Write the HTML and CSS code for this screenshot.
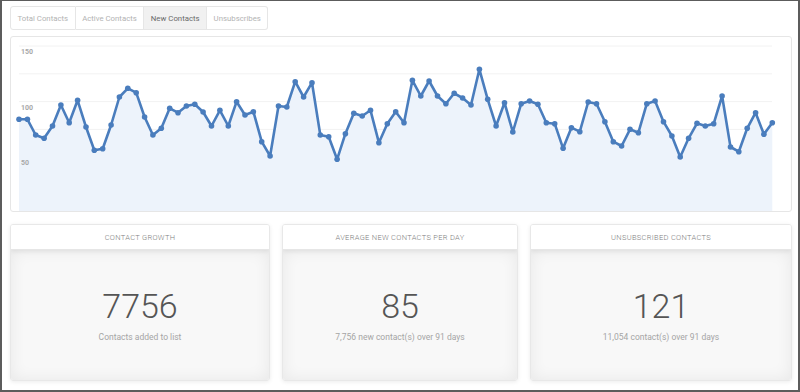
FILE: index.html
```html
<!DOCTYPE html>
<html lang="en">
  <head>
    <meta charset="UTF-8" />
    <meta name="viewport" content="width=device-width, initial-scale=1.0" />
    <title>Contacts</title>
    <link rel="stylesheet" href="styles.css">
  </head>
  <body>
    <div class="frame">
      <ul class="tabs">
        <li class="tab">Total Contacts</li>
        <li class="tab">Active Contacts</li>
        <li class="tab active">New Contacts</li>
        <li class="tab">Unsubscribes</li>
      </ul>

      <div class="chart-card">
        <svg class="chart" width="780" height="174" viewBox="0 0 780 174">
          <defs>
            <marker id="dot" markerWidth="7" markerHeight="7" refX="3.5" refY="3.5" markerUnits="userSpaceOnUse">
              <circle cx="3.5" cy="3.5" r="2.8" fill="#4a7dbd" />
            </marker>
          </defs>
          <g class="grid">
            <line x1="8" y1="9" x2="761" y2="9" />
            <line x1="8" y1="36.8" x2="761" y2="36.8" />
            <line x1="8" y1="64.6" x2="761" y2="64.6" />
            <line x1="8" y1="92.4" x2="761" y2="92.4" />
            <line x1="8" y1="120.2" x2="761" y2="120.2" />
            <line x1="8" y1="148" x2="761" y2="148" />
          </g>
          <polygon class="area" points="8,174 8,82.3 16.4,82.3 24.7,98 33.1,101.3 41.5,89 49.9,68 58.2,85.7 66.6,63.3 75,90 83.3,113.3 91.7,111.7 100.1,88 108.4,60 116.8,51.3 125.2,55.7 133.6,80 141.9,98 150.3,91.3 158.7,71.3 167,75.7 175.4,69 183.8,67.3 192.1,75 200.5,89 208.9,73.3 217.3,89 225.6,64.7 234,78 242.4,74.7 250.7,104.7 259.1,119 267.5,69 275.8,70 284.2,44.7 292.6,60 301,45.7 309.3,98 317.7,99.7 326.1,122.3 334.4,96.7 342.8,76.3 351.2,79 359.5,73.3 367.9,105.7 376.3,86.7 384.7,74.7 393,85.7 401.4,43.3 409.8,59 418.1,44 426.5,59 434.9,66.7 443.2,56.3 451.6,61 460,68 468.4,32.3 476.7,62.3 485.1,89 493.5,65.7 501.8,95 510.2,66.7 518.6,64 526.9,67.3 535.3,85.7 543.7,86.7 552.1,111.3 560.4,90.7 568.8,94.7 577.2,65 585.5,66.7 593.9,84.7 602.3,104.7 610.6,109 619,92.3 627.4,95.7 635.8,66.7 644.1,64 652.5,84.7 660.9,99 669.2,120 677.6,101.3 686,86.3 694.3,89 702.7,86.7 711.1,59 719.5,110 727.8,114.7 736.2,91.3 744.6,75.7 752.9,97.3 761.3,85.7 761.3,174" />
          <g class="labels">
            <text x="10" y="16.5">150</text>
            <text x="10" y="72.5">100</text>
            <text x="10" y="128">50</text>
          </g>
          <polyline class="line" points="8,82.3 16.4,82.3 24.7,98 33.1,101.3 41.5,89 49.9,68 58.2,85.7 66.6,63.3 75,90 83.3,113.3 91.7,111.7 100.1,88 108.4,60 116.8,51.3 125.2,55.7 133.6,80 141.9,98 150.3,91.3 158.7,71.3 167,75.7 175.4,69 183.8,67.3 192.1,75 200.5,89 208.9,73.3 217.3,89 225.6,64.7 234,78 242.4,74.7 250.7,104.7 259.1,119 267.5,69 275.8,70 284.2,44.7 292.6,60 301,45.7 309.3,98 317.7,99.7 326.1,122.3 334.4,96.7 342.8,76.3 351.2,79 359.5,73.3 367.9,105.7 376.3,86.7 384.7,74.7 393,85.7 401.4,43.3 409.8,59 418.1,44 426.5,59 434.9,66.7 443.2,56.3 451.6,61 460,68 468.4,32.3 476.7,62.3 485.1,89 493.5,65.7 501.8,95 510.2,66.7 518.6,64 526.9,67.3 535.3,85.7 543.7,86.7 552.1,111.3 560.4,90.7 568.8,94.7 577.2,65 585.5,66.7 593.9,84.7 602.3,104.7 610.6,109 619,92.3 627.4,95.7 635.8,66.7 644.1,64 652.5,84.7 660.9,99 669.2,120 677.6,101.3 686,86.3 694.3,89 702.7,86.7 711.1,59 719.5,110 727.8,114.7 736.2,91.3 744.6,75.7 752.9,97.3 761.3,85.7" />
        </svg>
      </div>

      <div class="stats">
        <div class="stat">
          <div class="stat-head">Contact Growth</div>
          <div class="stat-body">
            <p class="stat-num">7756</p>
            <p class="stat-note">Contacts added to list</p>
          </div>
        </div>
        <div class="stat">
          <div class="stat-head">Average New Contacts Per Day</div>
          <div class="stat-body">
            <p class="stat-num">85</p>
            <p class="stat-note">7,756 new contact(s) over 91 days</p>
          </div>
        </div>
        <div class="stat">
          <div class="stat-head">Unsubscribed Contacts</div>
          <div class="stat-body">
            <p class="stat-num">121</p>
            <p class="stat-note">11,054 contact(s) over 91 days</p>
          </div>
        </div>
      </div>
    </div>
  </body>
</html>
```

FILE: styles.css
```css
* {
  margin: 0;
  padding: 0;
  box-sizing: border-box;
}

body {
  font-family: Roboto, "Liberation Sans", sans-serif;
  background-color: #fff;
  width: 800px;
  height: 392px;
  overflow: hidden;
}

.frame {
  width: 800px;
  height: 392px;
  border: 2px solid #5c5c5c;
  border-top-width: 1px;
  padding: 5px 6px 0 8px;
}

/* tabs */
.tabs {
  display: flex;
  list-style: none;
  height: 24px;
}

.tab {
  display: flex;
  align-items: center;
  padding: 0 6.5px;
  font-size: 7.8px;
  color: #b3b3b3;
  border: 1px solid #e6e6e6;
  border-left: none;
  background: #fff;
}

.tab:first-child {
  border-left: 1px solid #e6e6e6;
  border-radius: 3px 0 0 3px;
}

.tab:last-child {
  border-radius: 0 3px 3px 0;
}

.tab.active {
  background: #f1f1f1;
  color: #6a6a6a;
}

/* chart */
.chart-card {
  margin-top: 6px;
  width: 782px;
  height: 176px;
  border: 1px solid #e6e6e6;
  border-radius: 3px;
  overflow: hidden;
}

.chart {
  display: block;
}

.grid line {
  stroke: #f2f2f2;
  stroke-width: 1;
}

.area {
  fill: #edf3fb;
}

.line {
  fill: none;
  stroke: #4a7dbd;
  stroke-width: 2.6;
  stroke-linejoin: round;
  marker: url(#dot);
}

.labels text {
  font-family: Roboto, "Liberation Sans", sans-serif;
  font-size: 7px;
  font-weight: bold;
  fill: #a8a8a8;
}

/* stats */
.stats {
  margin-top: 12px;
  display: grid;
  grid-template-columns: 260px 236px 1fr;
  gap: 12px;
  width: 782px;
}

.stat {
  height: 157px;
  display: flex;
  flex-direction: column;
  border: 1px solid #e8e8e8;
  border-radius: 3px;
  box-shadow: 0 1px 4px rgba(0, 0, 0, 0.08);
  overflow: hidden;
}

.stat-head {
  height: 25px;
  flex-shrink: 0;
  display: flex;
  align-items: center;
  justify-content: center;
  background: #fff;
  font-size: 7.5px;
  font-weight: 300;
  letter-spacing: 0.3px;
  text-transform: uppercase;
  color: #808080;
  border-bottom: 1px solid #e6e6e6;
  position: relative;
  z-index: 1;
  box-shadow: 0 2px 4px rgba(0, 0, 0, 0.06);
}

.stat-body {
  flex: 1;
  background: #f8f8f8;
  box-shadow: inset 0 0 16px rgba(0, 0, 0, 0.07);
  text-align: center;
  padding-top: 36px;
}

.stat-num {
  font-size: 34px;
  line-height: 40px;
  font-weight: 300;
  color: #555;
}

.stat-note {
  margin-top: 5px;
  font-size: 8.5px;
  line-height: 12px;
  color: #a5a5a5;
}
```
